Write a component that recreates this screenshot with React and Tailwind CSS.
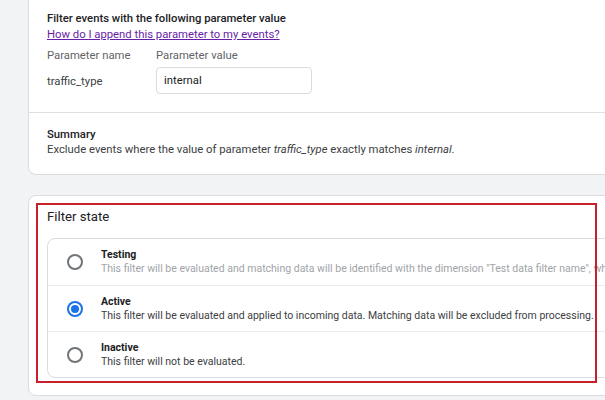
import React from 'react'

const font = { fontFamily: 'Roboto, "Liberation Sans", Arial, sans-serif' }

const states = [
  {
    id: 'testing',
    title: 'Testing',
    desc: 'This filter will be evaluated and matching data will be identified with the dimension "Test data filter name", which can be used in reports.',
    muted: true,
  },
  {
    id: 'active',
    title: 'Active',
    desc: 'This filter will be evaluated and applied to incoming data. Matching data will be excluded from processing.',
    checked: true,
  },
  {
    id: 'inactive',
    title: 'Inactive',
    desc: 'This filter will not be evaluated.',
  },
]

function Radio({ checked }) {
  if (checked) {
    return (
      <div className="w-[16px] h-[16px] rounded-full border-2 border-[#1a73e8] flex items-center justify-center shrink-0">
        <div className="w-[8px] h-[8px] rounded-full bg-[#1a73e8]"></div>
      </div>
    )
  }
  return <div className="w-[16px] h-[16px] rounded-full border-2 border-[#70757a] shrink-0"></div>
}

export default function App() {
  return (
    <div className="w-[605px] h-[400px] overflow-hidden bg-[#f1f3f4] pl-[28px] text-[#202124]" style={font}>
      {/* top card, its top is cut off by the viewport */}
      <div className="w-[620px] bg-white border border-t-0 border-[#dadce0] rounded-b-[8px]">
        <div className="h-[112px] pl-[18px] pt-[11px]">
          <div className="text-[11.3px] leading-[16px] font-medium text-[#202124]">Filter events with the following parameter value</div>
          <a href="#" className="block text-[11.3px] leading-[15px] text-[#681da8] underline">How do I append this parameter to my events?</a>
          <div className="flex mt-[6px] text-[11.3px] leading-[16px] text-[#5f6368]">
            <div className="w-[109px]">Parameter name</div>
            <div>Parameter value</div>
          </div>
          <div className="flex items-center mt-[3px] text-[11.3px]">
            <div className="w-[109px] text-[#3c4043] pt-[4px]">traffic_type</div>
            <div className="w-[156px] h-[27px] border border-[#dadce0] rounded-[4px] flex items-center px-[7px] pt-[1px] text-[#202124]">internal</div>
          </div>
        </div>
        <div className="border-t border-[#e0e0e0] h-[62px] pl-[18px] pt-[14px]">
          <div className="text-[11.3px] leading-[15px] font-medium text-[#202124]">Summary</div>
          <div className="text-[11.3px] leading-[15px] text-[#3c4043]">
            Exclude events where the value of parameter <i>traffic_type</i> exactly matches <i>internal</i>.
          </div>
        </div>
      </div>

      {/* filter state card */}
      <div className="relative mt-[20px] w-[620px] h-[201px] bg-white border border-[#dadce0] rounded-[8px] pl-[18px] pt-[11px]">
        <div className="text-[13.2px] leading-[20px] text-[#202124]">Filter state</div>
        <div className="mt-[11px] w-[600px] border border-[#dadce0] rounded-[8px]">
          {states.map((s, idx) => (
            <div
              key={s.id}
              className={`flex items-center h-[46px] ${idx > 0 ? 'border-t border-[#e8eaed]' : ''}`}
            >
              <div className="w-[52px] shrink-0 flex justify-center pl-[1px]">
                <Radio checked={s.checked} />
              </div>
              <div className="pl-[1px] whitespace-nowrap">
                <div className="text-[10.5px] leading-[14px] font-bold text-[#202124]">{s.title}</div>
                <div className={`text-[10.5px] leading-[14px] ${s.muted ? 'text-[#a0a4a8]' : 'text-[#3c4043]'}`}>{s.desc}</div>
              </div>
            </div>
          ))}
        </div>
        {/* annotation box drawn over the screenshot */}
        <div className="absolute left-[7px] top-[7px] w-[561px] h-[180px] border-2 border-[#c8202a] pointer-events-none"></div>
      </div>
    </div>
  )
}
